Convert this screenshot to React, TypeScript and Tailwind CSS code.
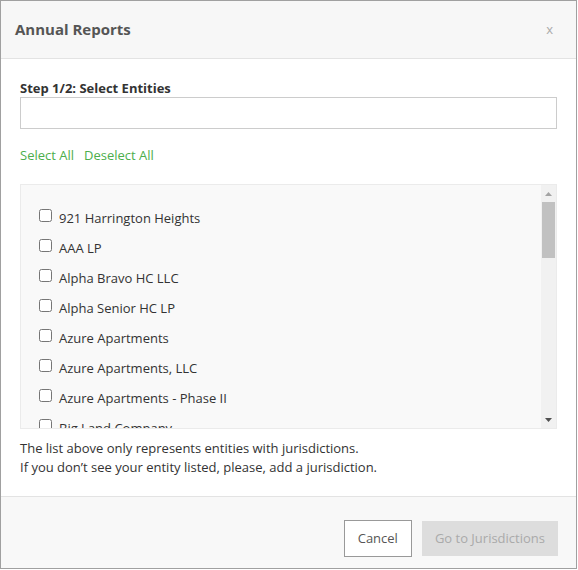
import React from 'react'

const entities = [
  '921 Harrington Heights',
  'AAA LP',
  'Alpha Bravo HC LLC',
  'Alpha Senior HC LP',
  'Azure Apartments',
  'Azure Apartments, LLC',
  'Azure Apartments - Phase II',
  'Big Land Company',
  'Blue Ridge Holdings',
  'Cedar Point LLC',
]

const App = () => {
  return (
    <div
      className="w-[577px] h-[569px] border border-[#a0a0a0] bg-white flex flex-col text-[13px] text-[#333]"
      style={{ fontFamily: '"Open Sans", "Noto Sans", sans-serif' }}
    >
      {/* header */}
      <div className="h-[58px] shrink-0 bg-[#f7f7f7] border-b border-[#e3e3e3] flex items-center justify-between pl-[14px] pr-[23px]">
        <span className="text-[15px] font-bold text-[#555]">Annual Reports</span>
        <span className="text-[13px] text-[#aaa]">x</span>
      </div>

      {/* body */}
      <div className="flex-1 px-[19px] pt-[20px]">
        <div className="font-bold text-[13px] leading-[18px] text-[#333]">Step 1/2: Select Entities</div>
        <input className="w-full h-[32px] border border-[#ccc] outline-none px-2" />

        <div className="flex gap-[10px] mt-[17px] text-[#4cae4c] leading-[18px]">
          <span>Select All</span>
          <span>Deselect All</span>
        </div>

        {/* entity list with scrollbar */}
        <div className="mt-[20px] h-[245px] border border-[#ebebeb] bg-[#f9f9f9] flex">
          <div className="flex-1 overflow-hidden pt-[19px] pl-[18px]">
            {entities.map((name) => (
              <label key={name} className="flex items-center h-[30px] gap-[7px]">
                <input type="checkbox" className="w-[13px] h-[13px] m-0 -mt-[7px] shrink-0" />
                <span className="whitespace-nowrap">{name}</span>
              </label>
            ))}
          </div>
          <div className="w-[15px] bg-[#f1f1f1] flex flex-col items-center">
            <div className="h-[17px] flex items-center justify-center">
              <svg width="7" height="4" viewBox="0 0 7 4">
                <path d="M3.5 0 L7 4 L0 4 Z" fill="#a3a3a3" />
              </svg>
            </div>
            <div className="w-[13px] h-[56px] bg-[#c1c1c1]" />
            <div className="flex-1" />
            <div className="h-[17px] flex items-center justify-center">
              <svg width="7" height="4" viewBox="0 0 7 4">
                <path d="M0 0 L7 0 L3.5 4 Z" fill="#505050" />
              </svg>
            </div>
          </div>
        </div>

        <div className="mt-[10px] leading-[19px]">
          <div>The list above only represents entities with jurisdictions.</div>
          <div>If you don’t see your entity listed, please, add a jurisdiction.</div>
        </div>
      </div>

      {/* footer */}
      <div className="h-[72px] shrink-0 bg-[#f8f8f8] border-t border-[#e3e3e3] flex items-start justify-end gap-[10px] pt-[23px] pr-[18px]">
        <button className="h-[37px] px-[13px] border border-[#999] bg-white text-[#555]">Cancel</button>
        <button className="h-[35px] mt-[1px] px-[13px] bg-[#dddddd] text-[#aaa]">Go to Jurisdictions</button>
      </div>
    </div>
  )
}

export default App
